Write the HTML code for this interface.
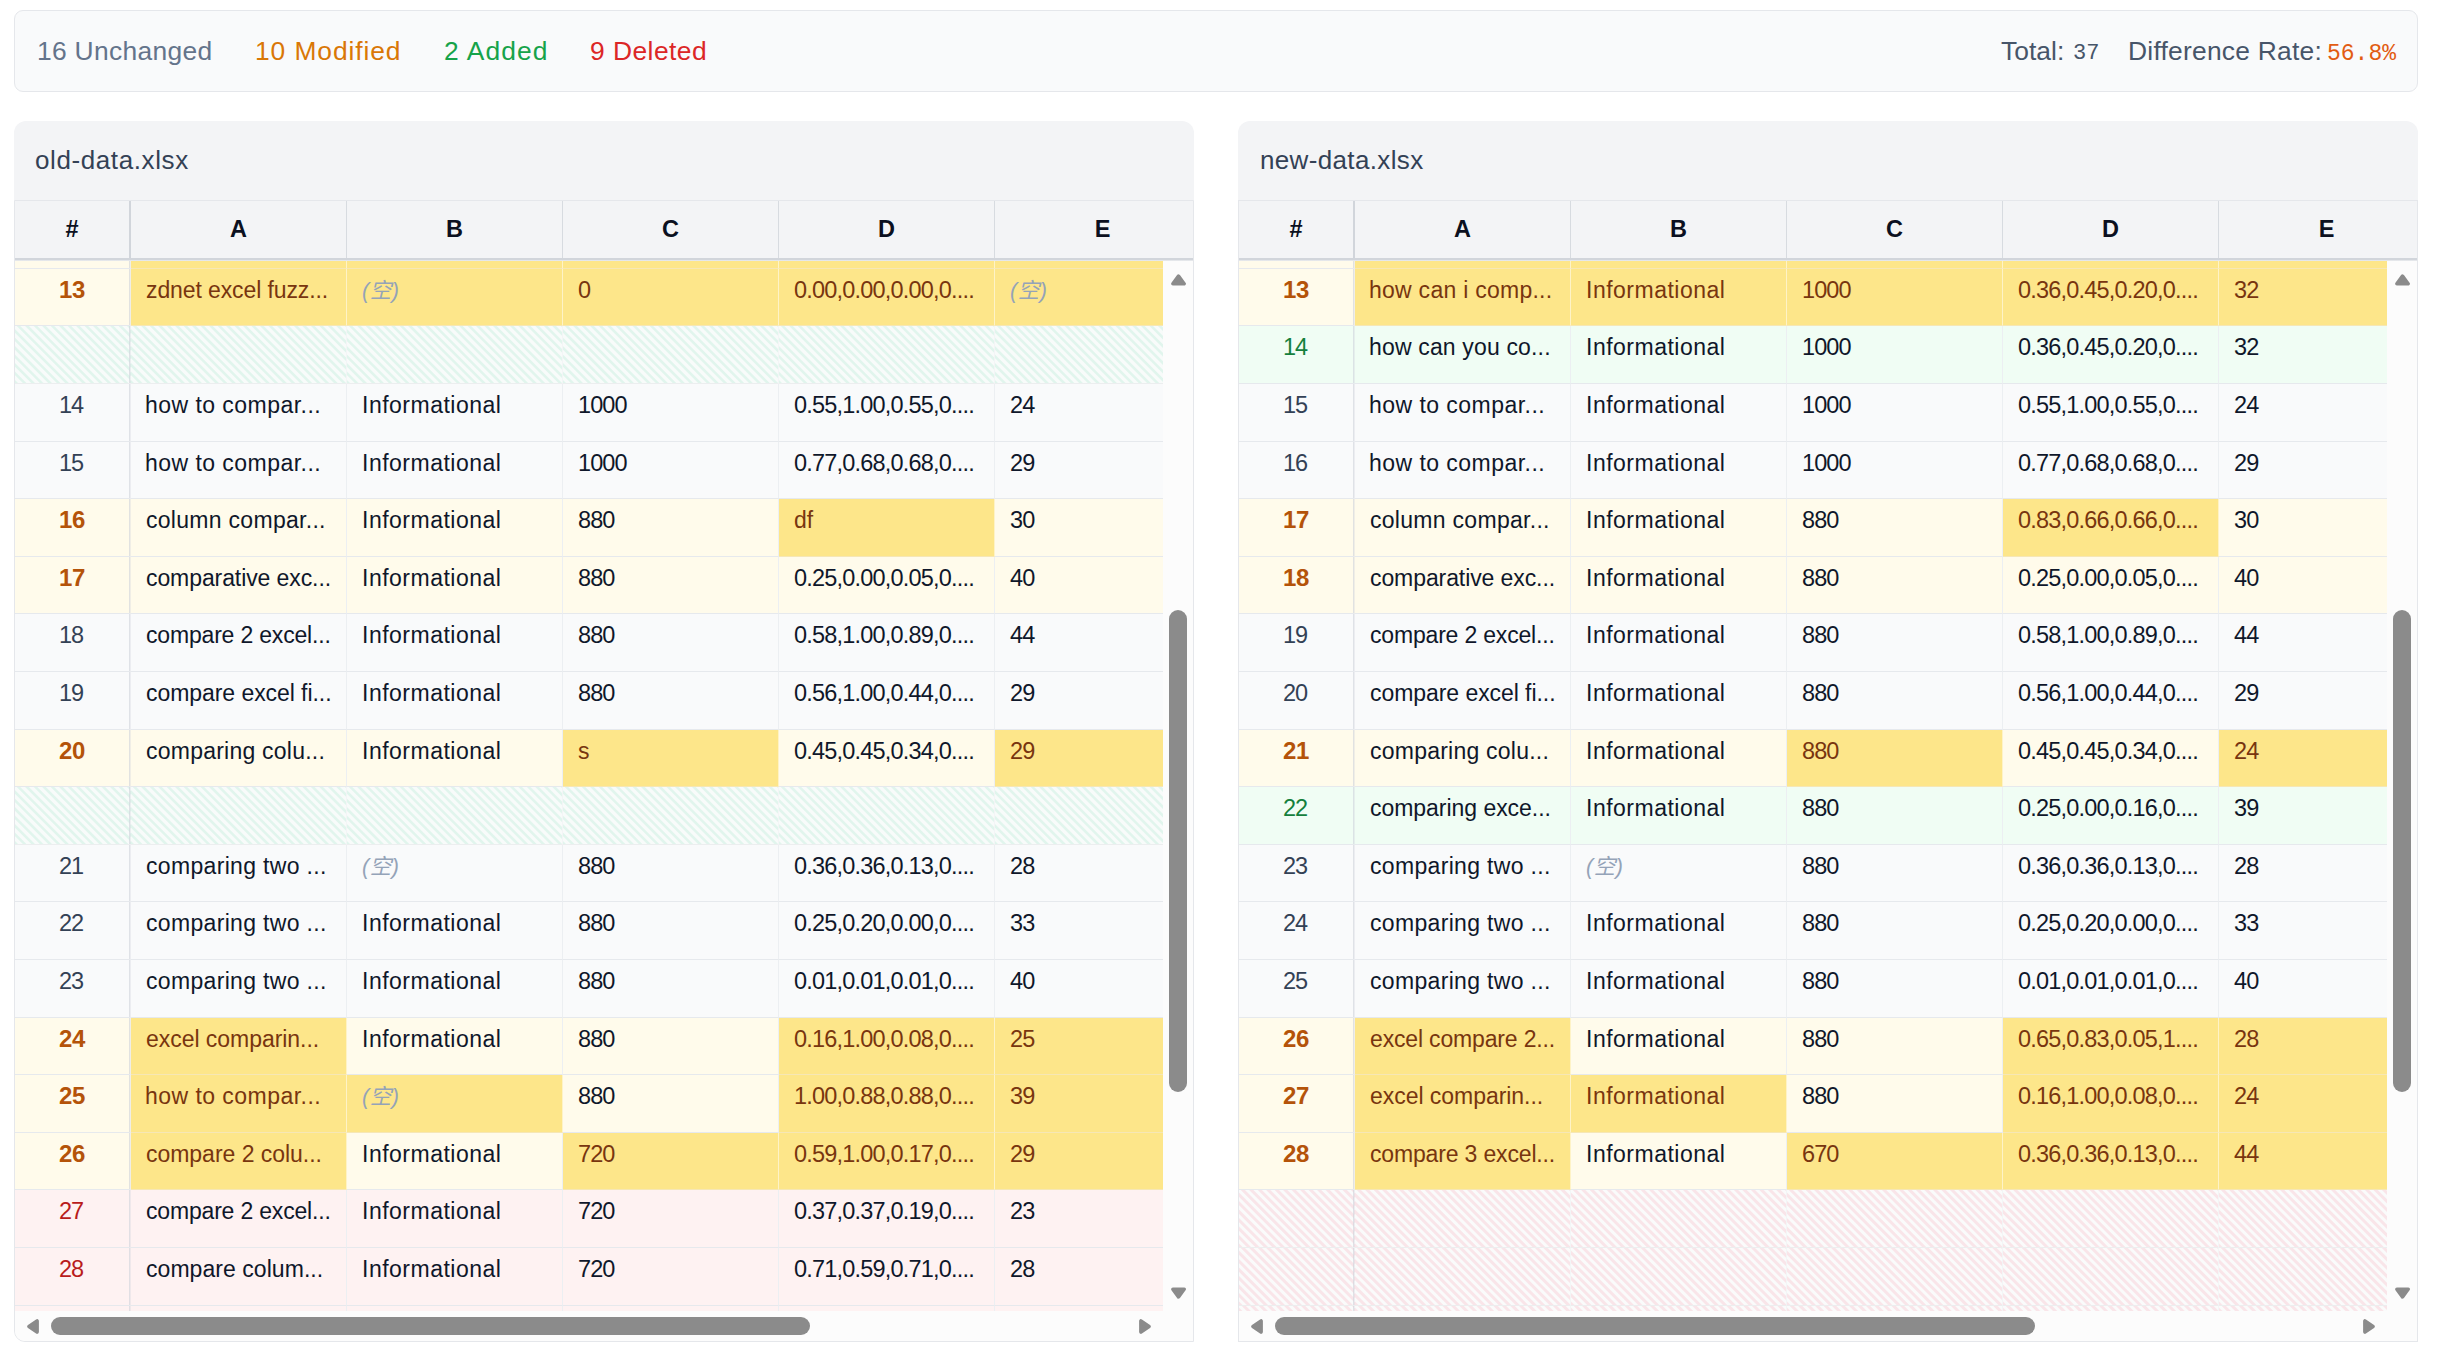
<!DOCTYPE html>
<html lang="en"><head><meta charset="utf-8"><title>Excel Diff</title>
<style>
html,body{margin:0;padding:0;background:#fff;}
body{width:2460px;height:1350px;overflow:hidden;position:relative;font-family:"Liberation Sans","Noto Sans CJK SC",sans-serif;color:#0f172a;}
#sum{position:absolute;left:14px;top:10px;width:2402px;height:80px;border:1px solid #e5e7eb;border-radius:9px;background:#f9fafb;}
#sum span{position:absolute;top:25px;font-size:26.4px;line-height:30px;white-space:nowrap;letter-spacing:.31px;}
.s1{left:22px;color:#64748b;}
.s2{left:240px;color:#d97706;letter-spacing:.91px !important;}
.s3{left:429px;color:#16a34a;letter-spacing:1.08px !important;}
.s4{left:575px;color:#dc2626;letter-spacing:.46px !important;}
.t1{left:1986px;color:#475569;letter-spacing:.05px !important;}
.t2{left:2058px;color:#475569;font-family:"Liberation Mono",monospace;font-size:22px !important;letter-spacing:0 !important;margin-top:3px;}
.t3{left:2113px;color:#475569;letter-spacing:.24px !important;}
.t4{left:2312px;color:#e25c12;font-family:"Liberation Mono",monospace;font-size:23px !important;letter-spacing:0 !important;margin-top:3px;}
.panel{position:absolute;top:121px;width:1180px;height:1221px;}
.ptitle{position:absolute;left:0;top:0;width:1180px;height:90px;background:#f3f4f6;border-radius:12px 12px 0 0;box-sizing:border-box;padding:24px 0 0 21px;font-size:26px;line-height:30px;letter-spacing:.6px;color:#334155;}
.grid{position:absolute;left:0;top:79px;width:1178px;height:1140px;border:1px solid #e5e7eb;background:#fdfdfd;overflow:hidden;}
.p1 .grid{border-radius:0 0 0 11px;}
.hdr{position:absolute;left:0;top:0;width:1178px;height:57px;background:#f3f4f6;display:flex;font-weight:bold;font-size:23.5px;line-height:56px;text-align:center;color:#0b1020;}
.hn{width:114px;border-right:2px solid #d1d5db;flex:none;}
.hc{width:215px;border-right:1px solid #d7dbe0;flex:none;}
.hline{position:absolute;left:0;top:57px;width:1178px;height:3px;background:linear-gradient(#d1d5db 0,#d1d5db 2px,rgba(209,213,219,.55) 2px,rgba(209,213,219,.55) 3px);}
.vp{position:absolute;left:0;top:60px;width:1148px;height:1050px;overflow:hidden;background:#fff;}
.r{position:absolute;left:0;width:1200px;display:flex;box-sizing:border-box;font-size:23.5px;}
.r>div{box-sizing:border-box;height:100%;flex:none;border-bottom:1px solid #e6e9ed;padding-top:6px;line-height:30px;white-space:nowrap;overflow:hidden;}
.n{width:116px;border-right:1px solid rgba(205,210,218,.3);box-shadow:inset -1px 0 0 rgba(205,210,218,.6);text-align:center;color:#334155;}
.c{width:216px;border-right:1px solid #eceff2;padding-left:15px;}
.n+.c{padding-left:15px;}
.n+.c.h{padding-left:14px;}
.c.t{font-size:23px;}
.c{letter-spacing:-.9px;}
.c.t{letter-spacing:0;}
.c.dd{letter-spacing:-.8px;}
.n{letter-spacing:-1px;padding-right:3px;}
.m>.n{letter-spacing:-.3px;padding-right:1px;}
.u>div{background:#f9fafb;}
.m>div{background:#fffbeb;}
.m>.n{color:#b45309;font-weight:bold;font-size:24px;}
.m>.c.y{background:#fde68a;color:#78350f;border-right-color:#fef3c7;border-bottom-color:#f6e7b5;}
.a>div{background:#f0fdf4;}
.a>.n{color:#15803d;}
.d>div{background:#fef2f2;}
.d>.n{color:#b91c1c;}
.pa>div{background:repeating-linear-gradient(45deg,#e1f5ed 0,#e1f5ed 1.6px,#f8fbfa 2.6px,#f8fbfa 5px,#e1f5ed 6px);}
.pd>div{background:repeating-linear-gradient(45deg,#f9e5e9 0,#f9e5e9 2px,#fafbfb 3px,#fafbfb 5px,#f9e5e9 6px);}
.e{font-style:italic;font-size:21.5px;color:#94a3b8;letter-spacing:.6px;}
.vsb{position:absolute;left:1148px;top:60px;width:30px;height:1050px;background:#fcfcfc;}
.hsb{position:absolute;left:0;top:1110px;width:1148px;height:30px;background:#fcfcfc;}
.corner{position:absolute;left:1148px;top:1110px;width:30px;height:30px;background:#fcfcfc;}
svg{position:absolute;fill:#8b8b8b;stroke:#8b8b8b;stroke-width:3.6;stroke-linejoin:round;}
.au{left:7.5px;top:12.6px;}
.ad{left:7.5px;top:1026.3px;}
.vth{position:absolute;left:6px;top:349px;width:18px;height:482px;border-radius:9px;background:#8b8b8b;}
.al{left:12px;top:8px;}
.ar{left:1124px;top:8px;}
.hth{position:absolute;left:36px;top:6px;width:759px;height:18px;border-radius:9px;background:#8b8b8b;}
.p2 .ptitle{letter-spacing:.35px;padding-left:22px;}
.p2 .hth{width:760px;}
.pa>.c,.pd>.c{border-right-color:#f3f5f6;border-bottom-color:#eceeef;}
.pa>.n,.pd>.n{border-bottom-color:#eceeef;}

</style></head>
<body>
<div id="sum">
 <span class="s1">16 Unchanged</span><span class="s2">10 Modified</span><span class="s3">2 Added</span><span class="s4">9 Deleted</span>
 <span class="t1">Total:</span><span class="t2">37</span><span class="t3">Difference Rate:</span><span class="t4">56.8%</span>
</div>

<div class="panel p1" style="left:14px">
 <div class="ptitle">old-data.xlsx</div>
 <div class="grid">
  <div class="hdr"><div class="hn">#</div><div class="hc">A</div><div class="hc">B</div><div class="hc">C</div><div class="hc">D</div><div class="hc">E</div></div>
  <div class="hline"></div>
  <div class="vp">
<div class="r m" style="top:-50px;height:58px"><div class="n"></div><div class="c y t"></div><div class="c y t"></div><div class="c y"></div><div class="c y"></div><div class="c y"></div></div>
<div class="r m" style="top:8px;height:57px"><div class="n">13</div><div class="c y t" style="letter-spacing:-0.11px">zdnet excel fuzz...</div><div class="c y t"><i class="e">(空)</i></div><div class="c y">0</div><div class="c y dd">0.00,0.00,0.00,0....</div><div class="c y"><i class="e">(空)</i></div></div>
<div class="r pa" style="top:65px;height:58px"><div class="n"></div><div class="c t"></div><div class="c t"></div><div class="c"></div><div class="c"></div><div class="c"></div></div>
<div class="r u" style="top:123px;height:58px"><div class="n">14</div><div class="c t h" style="letter-spacing:0.46px">how to compar...</div><div class="c t" style="letter-spacing:0.5px">Informational</div><div class="c">1000</div><div class="c dd">0.55,1.00,0.55,0....</div><div class="c">24</div></div>
<div class="r u" style="top:181px;height:57px"><div class="n">15</div><div class="c t h" style="letter-spacing:0.46px">how to compar...</div><div class="c t" style="letter-spacing:0.5px">Informational</div><div class="c">1000</div><div class="c dd">0.77,0.68,0.68,0....</div><div class="c">29</div></div>
<div class="r m" style="top:238px;height:58px"><div class="n">16</div><div class="c t" style="letter-spacing:0.29px">column compar...</div><div class="c t" style="letter-spacing:0.5px">Informational</div><div class="c">880</div><div class="c y t">df</div><div class="c">30</div></div>
<div class="r m" style="top:296px;height:57px"><div class="n">17</div><div class="c t" style="letter-spacing:-0.09px">comparative exc...</div><div class="c t" style="letter-spacing:0.5px">Informational</div><div class="c">880</div><div class="c dd">0.25,0.00,0.05,0....</div><div class="c">40</div></div>
<div class="r u" style="top:353px;height:58px"><div class="n">18</div><div class="c t" style="letter-spacing:-0.18px">compare 2 excel...</div><div class="c t" style="letter-spacing:0.5px">Informational</div><div class="c">880</div><div class="c dd">0.58,1.00,0.89,0....</div><div class="c">44</div></div>
<div class="r u" style="top:411px;height:58px"><div class="n">19</div><div class="c t" style="letter-spacing:-0.06px">compare excel fi...</div><div class="c t" style="letter-spacing:0.5px">Informational</div><div class="c">880</div><div class="c dd">0.56,1.00,0.44,0....</div><div class="c">29</div></div>
<div class="r m" style="top:469px;height:57px"><div class="n">20</div><div class="c t" style="letter-spacing:0.23px">comparing colu...</div><div class="c t" style="letter-spacing:0.5px">Informational</div><div class="c y t">s</div><div class="c dd">0.45,0.45,0.34,0....</div><div class="c y">29</div></div>
<div class="r pa" style="top:526px;height:58px"><div class="n"></div><div class="c t"></div><div class="c t"></div><div class="c"></div><div class="c"></div><div class="c"></div></div>
<div class="r u" style="top:584px;height:57px"><div class="n">21</div><div class="c t" style="letter-spacing:0.33px">comparing two ...</div><div class="c t"><i class="e">(空)</i></div><div class="c">880</div><div class="c dd">0.36,0.36,0.13,0....</div><div class="c">28</div></div>
<div class="r u" style="top:641px;height:58px"><div class="n">22</div><div class="c t" style="letter-spacing:0.33px">comparing two ...</div><div class="c t" style="letter-spacing:0.5px">Informational</div><div class="c">880</div><div class="c dd">0.25,0.20,0.00,0....</div><div class="c">33</div></div>
<div class="r u" style="top:699px;height:58px"><div class="n">23</div><div class="c t" style="letter-spacing:0.33px">comparing two ...</div><div class="c t" style="letter-spacing:0.5px">Informational</div><div class="c">880</div><div class="c dd">0.01,0.01,0.01,0....</div><div class="c">40</div></div>
<div class="r m" style="top:757px;height:57px"><div class="n">24</div><div class="c y t" style="letter-spacing:-0.04px">excel comparin...</div><div class="c t" style="letter-spacing:0.5px">Informational</div><div class="c">880</div><div class="c y dd">0.16,1.00,0.08,0....</div><div class="c y">25</div></div>
<div class="r m" style="top:814px;height:58px"><div class="n">25</div><div class="c y t h" style="letter-spacing:0.46px">how to compar...</div><div class="c y t"><i class="e">(空)</i></div><div class="c">880</div><div class="c y dd">1.00,0.88,0.88,0....</div><div class="c y">39</div></div>
<div class="r m" style="top:872px;height:57px"><div class="n">26</div><div class="c y t" style="letter-spacing:-0.03px">compare 2 colu...</div><div class="c t" style="letter-spacing:0.5px">Informational</div><div class="c y">720</div><div class="c y dd">0.59,1.00,0.17,0....</div><div class="c y">29</div></div>
<div class="r d" style="top:929px;height:58px"><div class="n">27</div><div class="c t" style="letter-spacing:-0.18px">compare 2 excel...</div><div class="c t" style="letter-spacing:0.5px">Informational</div><div class="c">720</div><div class="c dd">0.37,0.37,0.19,0....</div><div class="c">23</div></div>
<div class="r d" style="top:987px;height:58px"><div class="n">28</div><div class="c t" style="letter-spacing:0.05px">compare colum...</div><div class="c t" style="letter-spacing:0.5px">Informational</div><div class="c">720</div><div class="c dd">0.71,0.59,0.71,0....</div><div class="c">28</div></div>
<div class="r d" style="top:1045px;height:57px"><div class="n"></div><div class="c t"></div><div class="c t"></div><div class="c"></div><div class="c"></div><div class="c"></div></div>
  </div>
  <div class="vsb">
   <svg class="au" width="15" height="12" viewBox="0 0 15 12"><path d="M7.5 2.1 L13.1 9.7 L1.9 9.7 Z"/></svg>
   <div class="vth"></div>
   <svg class="ad" width="15" height="12" viewBox="0 0 15 12"><path d="M7.5 9.9 L13.1 2.3 L1.9 2.3 Z"/></svg>
  </div>
  <div class="hsb">
   <svg class="al" width="12" height="15" viewBox="0 0 12 15"><path d="M2 7.5 L10.1 1.9 L10.1 13.1 Z"/></svg>
   <div class="hth"></div>
   <svg class="ar" width="12" height="15" viewBox="0 0 12 15"><path d="M10 7.5 L1.9 1.9 L1.9 13.1 Z"/></svg>
  </div>
  <div class="corner"></div>
 </div>
</div>

<div class="panel p2" style="left:1238px">
 <div class="ptitle">new-data.xlsx</div>
 <div class="grid">
  <div class="hdr"><div class="hn">#</div><div class="hc">A</div><div class="hc">B</div><div class="hc">C</div><div class="hc">D</div><div class="hc">E</div></div>
  <div class="hline"></div>
  <div class="vp">
<div class="r m" style="top:-50px;height:58px"><div class="n"></div><div class="c y t"></div><div class="c y t"></div><div class="c y"></div><div class="c y"></div><div class="c y"></div></div>
<div class="r m" style="top:8px;height:57px"><div class="n">13</div><div class="c y t h" style="letter-spacing:0.26px">how can i comp...</div><div class="c y t" style="letter-spacing:0.5px">Informational</div><div class="c y">1000</div><div class="c y dd">0.36,0.45,0.20,0....</div><div class="c y">32</div></div>
<div class="r a" style="top:65px;height:58px"><div class="n">14</div><div class="c t h" style="letter-spacing:0.16px">how can you co...</div><div class="c t" style="letter-spacing:0.5px">Informational</div><div class="c">1000</div><div class="c dd">0.36,0.45,0.20,0....</div><div class="c">32</div></div>
<div class="r u" style="top:123px;height:58px"><div class="n">15</div><div class="c t h" style="letter-spacing:0.46px">how to compar...</div><div class="c t" style="letter-spacing:0.5px">Informational</div><div class="c">1000</div><div class="c dd">0.55,1.00,0.55,0....</div><div class="c">24</div></div>
<div class="r u" style="top:181px;height:57px"><div class="n">16</div><div class="c t h" style="letter-spacing:0.46px">how to compar...</div><div class="c t" style="letter-spacing:0.5px">Informational</div><div class="c">1000</div><div class="c dd">0.77,0.68,0.68,0....</div><div class="c">29</div></div>
<div class="r m" style="top:238px;height:58px"><div class="n">17</div><div class="c t" style="letter-spacing:0.29px">column compar...</div><div class="c t" style="letter-spacing:0.5px">Informational</div><div class="c">880</div><div class="c y dd">0.83,0.66,0.66,0....</div><div class="c">30</div></div>
<div class="r m" style="top:296px;height:57px"><div class="n">18</div><div class="c t" style="letter-spacing:-0.09px">comparative exc...</div><div class="c t" style="letter-spacing:0.5px">Informational</div><div class="c">880</div><div class="c dd">0.25,0.00,0.05,0....</div><div class="c">40</div></div>
<div class="r u" style="top:353px;height:58px"><div class="n">19</div><div class="c t" style="letter-spacing:-0.18px">compare 2 excel...</div><div class="c t" style="letter-spacing:0.5px">Informational</div><div class="c">880</div><div class="c dd">0.58,1.00,0.89,0....</div><div class="c">44</div></div>
<div class="r u" style="top:411px;height:58px"><div class="n">20</div><div class="c t" style="letter-spacing:-0.06px">compare excel fi...</div><div class="c t" style="letter-spacing:0.5px">Informational</div><div class="c">880</div><div class="c dd">0.56,1.00,0.44,0....</div><div class="c">29</div></div>
<div class="r m" style="top:469px;height:57px"><div class="n">21</div><div class="c t" style="letter-spacing:0.23px">comparing colu...</div><div class="c t" style="letter-spacing:0.5px">Informational</div><div class="c y">880</div><div class="c dd">0.45,0.45,0.34,0....</div><div class="c y">24</div></div>
<div class="r a" style="top:526px;height:58px"><div class="n">22</div><div class="c t" style="letter-spacing:-0.04px">comparing exce...</div><div class="c t" style="letter-spacing:0.5px">Informational</div><div class="c">880</div><div class="c dd">0.25,0.00,0.16,0....</div><div class="c">39</div></div>
<div class="r u" style="top:584px;height:57px"><div class="n">23</div><div class="c t" style="letter-spacing:0.33px">comparing two ...</div><div class="c t"><i class="e">(空)</i></div><div class="c">880</div><div class="c dd">0.36,0.36,0.13,0....</div><div class="c">28</div></div>
<div class="r u" style="top:641px;height:58px"><div class="n">24</div><div class="c t" style="letter-spacing:0.33px">comparing two ...</div><div class="c t" style="letter-spacing:0.5px">Informational</div><div class="c">880</div><div class="c dd">0.25,0.20,0.00,0....</div><div class="c">33</div></div>
<div class="r u" style="top:699px;height:58px"><div class="n">25</div><div class="c t" style="letter-spacing:0.33px">comparing two ...</div><div class="c t" style="letter-spacing:0.5px">Informational</div><div class="c">880</div><div class="c dd">0.01,0.01,0.01,0....</div><div class="c">40</div></div>
<div class="r m" style="top:757px;height:57px"><div class="n">26</div><div class="c y t" style="letter-spacing:-0.16px">excel compare 2...</div><div class="c t" style="letter-spacing:0.5px">Informational</div><div class="c">880</div><div class="c y dd">0.65,0.83,0.05,1....</div><div class="c y">28</div></div>
<div class="r m" style="top:814px;height:58px"><div class="n">27</div><div class="c y t" style="letter-spacing:-0.04px">excel comparin...</div><div class="c y t" style="letter-spacing:0.5px">Informational</div><div class="c">880</div><div class="c y dd">0.16,1.00,0.08,0....</div><div class="c y">24</div></div>
<div class="r m" style="top:872px;height:57px"><div class="n">28</div><div class="c y t" style="letter-spacing:-0.16px">compare 3 excel...</div><div class="c t" style="letter-spacing:0.5px">Informational</div><div class="c y">670</div><div class="c y dd">0.36,0.36,0.13,0....</div><div class="c y">44</div></div>
<div class="r pd" style="top:929px;height:58px"><div class="n"></div><div class="c t"></div><div class="c t"></div><div class="c"></div><div class="c"></div><div class="c"></div></div>
<div class="r pd" style="top:987px;height:58px"><div class="n"></div><div class="c t"></div><div class="c t"></div><div class="c"></div><div class="c"></div><div class="c"></div></div>
<div class="r pd" style="top:1045px;height:57px"><div class="n"></div><div class="c t"></div><div class="c t"></div><div class="c"></div><div class="c"></div><div class="c"></div></div>
  </div>
  <div class="vsb">
   <svg class="au" width="15" height="12" viewBox="0 0 15 12"><path d="M7.5 2.1 L13.1 9.7 L1.9 9.7 Z"/></svg>
   <div class="vth"></div>
   <svg class="ad" width="15" height="12" viewBox="0 0 15 12"><path d="M7.5 9.9 L13.1 2.3 L1.9 2.3 Z"/></svg>
  </div>
  <div class="hsb">
   <svg class="al" width="12" height="15" viewBox="0 0 12 15"><path d="M2 7.5 L10.1 1.9 L10.1 13.1 Z"/></svg>
   <div class="hth"></div>
   <svg class="ar" width="12" height="15" viewBox="0 0 12 15"><path d="M10 7.5 L1.9 1.9 L1.9 13.1 Z"/></svg>
  </div>
  <div class="corner"></div>
 </div>
</div>
</body></html>
